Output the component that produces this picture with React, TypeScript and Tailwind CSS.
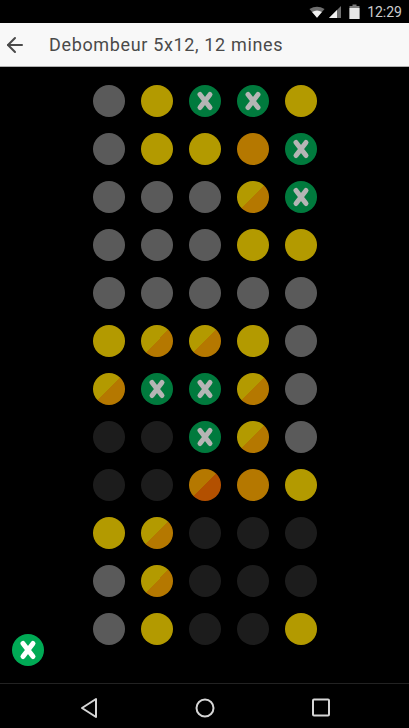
import React from 'react';
import { ArrowLeft } from 'lucide-react';

type Cell = 'g' | 'y' | 'x' | 'o' | 'yo' | 'd' | 'od';

const rows: Cell[][] = [
  ['g', 'y', 'x', 'x', 'y'],
  ['g', 'y', 'y', 'o', 'x'],
  ['g', 'g', 'g', 'yo', 'x'],
  ['g', 'g', 'g', 'y', 'y'],
  ['g', 'g', 'g', 'g', 'g'],
  ['y', 'yo', 'yo', 'y', 'g'],
  ['yo', 'x', 'x', 'yo', 'g'],
  ['d', 'd', 'x', 'yo', 'g'],
  ['d', 'd', 'od', 'o', 'y'],
  ['y', 'yo', 'd', 'd', 'd'],
  ['g', 'yo', 'd', 'd', 'd'],
  ['g', 'y', 'd', 'd', 'y'],
];

const cellColors: Record<Cell, string> = {
  g: 'bg-[#5a5a5a]',
  y: 'bg-[#b39a00]',
  x: 'bg-[#007a3d]',
  o: 'bg-[#b57800]',
  yo: 'bg-[linear-gradient(135deg,#b39a00_50%,#b57800_50%)]',
  d: 'bg-[#1c1c1c]',
  od: 'bg-[linear-gradient(135deg,#b57800_50%,#b35000_50%)]',
};

const Cross = ({ color }: { color: string }) => (
  <svg width="32" height="32" viewBox="0 0 32 32" fill="none" stroke={color} strokeWidth="5" strokeLinecap="round">
    <path d="M11 9.5 L21 22.5 M21 9.5 L11 22.5" />
  </svg>
);

const StatusBar = () => (
  <div className="flex h-[23px] items-center justify-end pr-[7px] bg-black text-[#cccccc]">
    <svg width="16" height="14" viewBox="0 0 18 14">
      <path d="M0.5 3.5 Q9 -1.5 17.5 3.5 L9 13.5 Z" fill="#6f6f6f" />
      <path d="M3.5 7 Q9 3.5 14.5 7 L9 13.5 Z" fill="#f2f2f2" />
    </svg>
    <svg width="14" height="14" viewBox="0 0 14 14" className="ml-[3px]">
      <path d="M1 13 L13 1 V13 Z" fill="#6f6f6f" />
      <path d="M1 13 L9 5 V13 Z" fill="#f2f2f2" />
    </svg>
    <svg width="11" height="15" viewBox="0 0 11 15" className="ml-[7px]">
      <path d="M3.5 0.5 H7.5 V2 H10.5 V15 H0.5 V2 H3.5 Z" fill="#7a7a7a" />
      <path d="M0.5 4 H10.5 V15 H0.5 Z" fill="#e8e8e8" />
    </svg>
    <span className="ml-[7px] text-[14px] leading-none font-['Roboto',sans-serif]">12:29</span>
  </div>
);

const AppBar = () => (
  <div className="flex h-[44px] items-center bg-[#f8f8f8] border-b border-[#b0b0b0] text-[#4a4a4a]">
    <ArrowLeft size={24} strokeWidth={2} className="ml-[3px]" />
    <span className="ml-[22px] text-[18px] tracking-[0.65px] font-['Roboto',sans-serif]">Debombeur 5x12, 12 mines</span>
  </div>
);

const NavBar = () => (
  <div className="flex h-[45px] items-center border-t border-[#222222] bg-black">
    <svg width="409" height="44" viewBox="0 0 409 44" fill="none" stroke="#d6d6d6" strokeWidth="2" strokeLinejoin="round">
      <path d="M96 15 V33 L82 24 Z" />
      <circle cx="205" cy="24" r="8.5" />
      <rect x="313" y="15.5" width="16" height="16" rx="1" />
    </svg>
  </div>
);

export default function App() {
  return (
    <div className="flex flex-col h-[728px] w-[409px] bg-black overflow-hidden">
      <StatusBar />
      <AppBar />
      <div className="relative flex-1">
        <div className="flex flex-col gap-4 pt-[18px]">
          {rows.map((row, r) => (
            <div key={r} className="flex justify-center gap-4 pl-[1px]">
              {row.map((cell, c) => (
                <div key={c} className={`w-8 h-8 rounded-full ${cellColors[cell]}`}>
                  {cell === 'x' && <Cross color="#b5b5b5" />}
                </div>
              ))}
            </div>
          ))}
        </div>
        <div className="absolute left-3 bottom-[17px] w-8 h-8 rounded-full bg-[#00aa55]">
          <Cross color="#ffffff" />
        </div>
      </div>
      <NavBar />
    </div>
  );
}
